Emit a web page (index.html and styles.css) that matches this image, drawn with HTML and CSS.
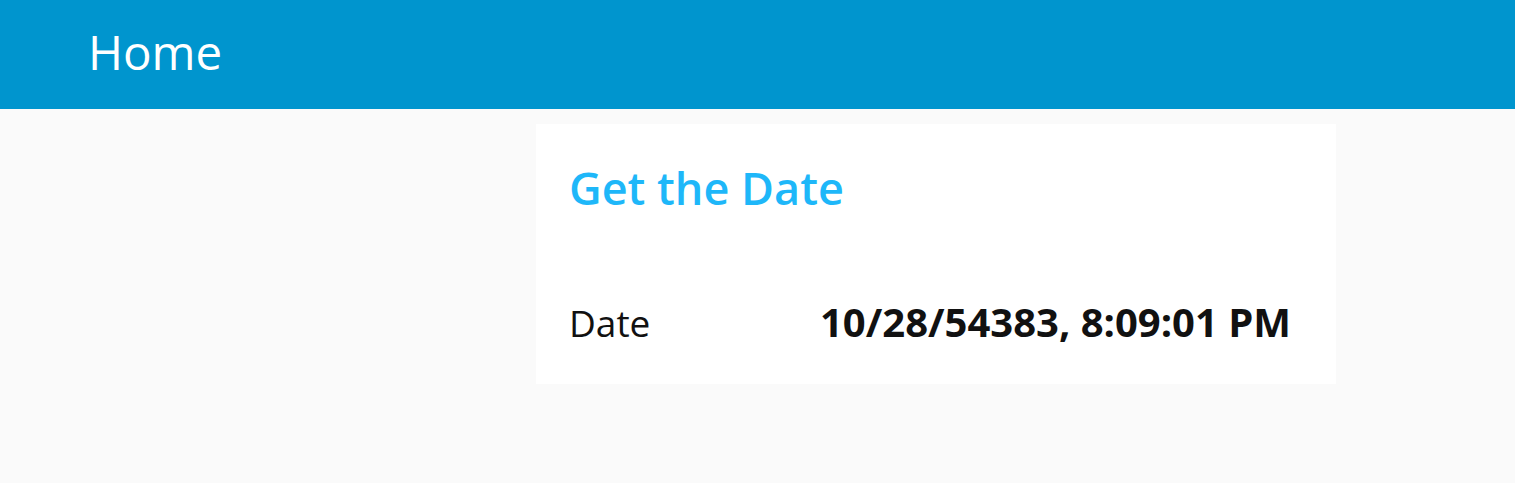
FILE: index.html
```html
<!DOCTYPE html>
<html lang="en">
<head>
<meta charset="utf-8">
<title>Home</title>
<link rel="stylesheet" href="styles.css">
</head>
<body>
<header class="app-bar">
  <h1 class="app-title">Home</h1>
</header>
<main class="content">
  <section class="card">
    <h2 class="card-title">Get the Date</h2>
    <div class="field-row">
      <span class="field-label">Date</span>
      <span class="field-value">10/28/54383, 8:09:01 PM</span>
    </div>
  </section>
</main>
</body>
</html>
```
FILE: styles.css
```css
* { box-sizing: border-box; }
html, body { margin: 0; padding: 0; }
body {
  background: #fafafa;
  font-family: "Open Sans", "Noto Sans", sans-serif;
  color: #111;
  height: 483px;
  overflow: hidden;
}
.app-bar {
  background: #0095ce;
  height: 109px;
  display: flex;
  align-items: flex-start;
  padding: 28px 0 0 88px;
}
.app-title {
  margin: 0;
  color: #fff;
  font-weight: 400;
  font-size: 47.5px;
  line-height: 1;
}
.content {
  padding-top: 15px;
  padding-left: 536px;
}
.card {
  background: #fff;
  width: 800px;
  height: 260px;
  padding: 41px 32px 0 33px;
}
.card-title {
  margin: 0;
  color: #1eb7f9;
  font-weight: 600;
  font-size: 45px;
  line-height: 1;
}
.field-row {
  display: grid;
  grid-template-columns: 251px 1fr;
  align-items: baseline;
  margin-top: 92px;
}
.field-label {
  font-size: 37px;
  font-weight: 400;
  line-height: 1;
}
.field-value {
  font-size: 40px;
  font-weight: 700;
  line-height: 1;
}
```
